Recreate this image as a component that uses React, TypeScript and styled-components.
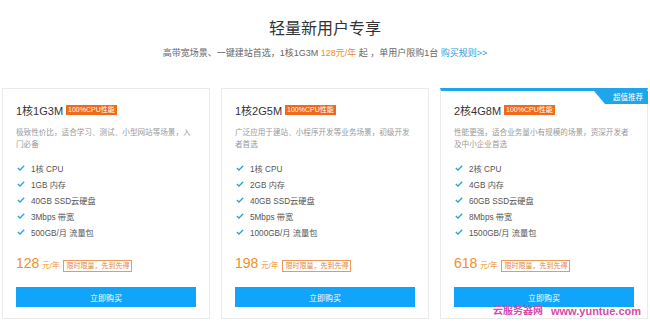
import React from 'react';
import styled, { createGlobalStyle } from 'styled-components';

const GlobalStyle = createGlobalStyle`
  html, body {
    margin: 0;
    padding: 0;
    background: #fff;
  }
  body {
    font-family: "Liberation Sans", "Noto Sans CJK SC", sans-serif;
    color: #333;
  }
`;

type Plan = {
  name: string;
  desc: string;
  features: string[];
  price: string;
  featured?: boolean;
};

const plans: Plan[] = [
  {
    name: '1核1G3M',
    desc: '极致性价比，适合学习、测试、小型网站等场景，入门必备',
    features: ['1核 CPU', '1GB 内存', '40GB SSD云硬盘', '3Mbps 带宽', '500GB/月 流量包'],
    price: '128',
  },
  {
    name: '1核2G5M',
    desc: '广泛应用于建站、小程序开发等业务场景，初级开发者首选',
    features: ['1核 CPU', '2GB 内存', '40GB SSD云硬盘', '5Mbps 带宽', '1000GB/月 流量包'],
    price: '198',
  },
  {
    name: '2核4G8M',
    desc: '性能更强，适合业务量小有规模的场景，资深开发者及中小企业首选',
    features: ['2核 CPU', '4GB 内存', '60GB SSD云硬盘', '8Mbps 带宽', '1500GB/月 流量包'],
    price: '618',
    featured: true,
  },
];

const Check = () => (
  <svg width="8" height="6" viewBox="0 0 8 6">
    <polyline
      points="0.8,3 3,5 7.2,0.8"
      fill="none"
      stroke="#2f9fd8"
      strokeWidth="1.3"
    />
  </svg>
);

const App: React.FC = () => {
  return (
    <Page>
      <GlobalStyle />
      <Header>
        <Title>轻量新用户专享</Title>
        <Subtitle>
          高带宽场景、一键建站首选，1核1G3M <Orange>128元/年</Orange> 起 ，单用户限购1台{' '}
          <Link>购买规则&gt;&gt;</Link>
        </Subtitle>
      </Header>
      <Cards>
        {plans.map((p) => (
          <Card key={p.name} $featured={p.featured}>
            {p.featured && <Ribbon>超值推荐</Ribbon>}
            <NameRow>
              <Name>{p.name}</Name>
              <CpuTag>100%CPU性能</CpuTag>
            </NameRow>
            <Desc>{p.desc}</Desc>
            <Features>
              {p.features.map((f) => (
                <Feature key={f}>
                  <Check />
                  <span>{f}</span>
                </Feature>
              ))}
            </Features>
            <PriceRow>
              <Price>{p.price}</Price>
              <Unit>元/年</Unit>
              <LimitTag>限时限量，先到先得</LimitTag>
            </PriceRow>
            <BuyButton>立即购买</BuyButton>
          </Card>
        ))}
      </Cards>
      <Watermark>
        <span className="cn">云服务器网</span>
        <span>www.yuntue.com</span>
      </Watermark>
    </Page>
  );
};

export default App;

const Page = styled.div`
  position: relative;
  width: 650px;
  height: 330px;
  overflow: hidden;
  padding-top: 19px;
  box-sizing: border-box;
`;

const Header = styled.div`
  display: flex;
  flex-direction: column;
  align-items: center;
`;

const Title = styled.h1`
  margin: 0;
  font-size: 16px;
  line-height: 20px;
  font-weight: normal;
  color: #333;
`;

const Subtitle = styled.p`
  margin: 8px 0 0;
  font-size: 9px;
  line-height: 12px;
  color: #666;
`;

const Orange = styled.span`
  color: #f0901e;
`;

const Link = styled.span`
  color: #2d9fe0;
`;

const Cards = styled.div`
  display: flex;
  gap: 11px;
  padding-left: 2px;
  margin-top: 29px;
`;

const Card = styled.div<{ $featured?: boolean }>`
  position: relative;
  width: 208px;
  height: 231px;
  box-sizing: border-box;
  border: 1px solid #ebebeb;
  border-top: ${({ $featured }) => ($featured ? '3px solid #1ea5ec' : '1px solid #ebebeb')};
  padding: ${({ $featured }) => ($featured ? '12px' : '14px')} 13px 0;
  background: #fff;
  display: flex;
  flex-direction: column;
`;

const Ribbon = styled.div`
  position: absolute;
  top: 0;
  right: -1px;
  height: 13px;
  width: 54px;
  background: #1ea5ec;
  clip-path: polygon(0 0, 100% 0, 100% 100%, 11px 100%);
  color: #fff;
  font-size: 7.5px;
  line-height: 13px;
  text-align: right;
  padding-right: 5px;
  box-sizing: border-box;
`;

const NameRow = styled.div`
  display: flex;
  align-items: center;
  height: 14px;
  gap: 3px;
`;

const Name = styled.span`
  font-size: 11px;
  color: #333;
`;

const CpuTag = styled.span`
  background: #ef6a1b;
  color: #fff;
  font-size: 7px;
  line-height: 10px;
  height: 10px;
  padding: 0 2px;
`;

const Desc = styled.p`
  margin: 10px 0 0;
  width: 178px;
  font-size: 7.6px;
  line-height: 12px;
  color: #999;
  height: 24px;
`;

const Features = styled.ul`
  list-style: none;
  margin: 9px 0 0;
  padding: 0 0 0 1px;
`;

const Feature = styled.li`
  display: flex;
  align-items: center;
  gap: 6px;
  height: 16px;
  font-size: 8.2px;
  color: #555;
`;

const PriceRow = styled.div`
  display: flex;
  align-items: baseline;
  margin-top: 16px;
  height: 14px;
  color: #f0901e;
`;

const Price = styled.span`
  font-size: 14px;
  line-height: 14px;
`;

const Unit = styled.span`
  font-size: 7.5px;
  margin-left: 3px;
`;

const LimitTag = styled.span`
  margin-left: 4px;
  border: 1px solid #e79a5a;
  font-size: 7px;
  line-height: 10px;
  padding: 0 2px;
  color: #e3843a;
`;

const BuyButton = styled.button`
  margin-top: 17px;
  height: 20px;
  width: 100%;
  border: none;
  background: #10a4fb;
  color: #fff;
  font-family: inherit;
  font-size: 8px;
  padding: 0;
`;

const Watermark = styled.div`
  position: absolute;
  left: 493px;
  top: 304px;
  display: flex;
  gap: 8px;
  color: #d94aa8;
  font-size: 11px;
  font-weight: bold;
  line-height: 14px;
  .cn {
    font-size: 10px;
  }
`;
